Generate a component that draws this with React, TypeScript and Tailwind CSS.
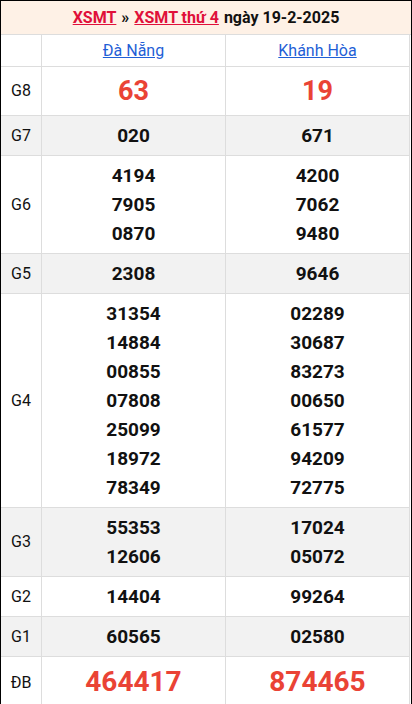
const rows: { label: string; a: string[]; b: string[]; kind?: 'big' | 'db'; grey?: boolean }[] = [
  { label: 'G8', a: ['63'], b: ['19'], kind: 'big' },
  { label: 'G7', a: ['020'], b: ['671'], grey: true },
  { label: 'G6', a: ['4194', '7905', '0870'], b: ['4200', '7062', '9480'] },
  { label: 'G5', a: ['2308'], b: ['9646'], grey: true },
  {
    label: 'G4',
    a: ['31354', '14884', '00855', '07808', '25099', '18972', '78349'],
    b: ['02289', '30687', '83273', '00650', '61577', '94209', '72775'],
  },
  { label: 'G3', a: ['55353', '12606'], b: ['17024', '05072'], grey: true },
  { label: 'G2', a: ['14404'], b: ['99264'] },
  { label: 'G1', a: ['60565'], b: ['02580'], grey: true },
  { label: 'ĐB', a: ['464417'], b: ['874465'], kind: 'db' },
]

function Nums({ list, kind }: { list: string[]; kind?: 'big' | 'db' }) {
  if (kind === 'big') {
    return <div className="h-[48px] flex items-center justify-center text-[27px] font-bold text-[#ea4335]">{list[0]}</div>
  }
  if (kind === 'db') {
    return <div className="h-[52px] flex items-center justify-center text-[28px] font-bold text-[#ea4335] pb-[2px]">{list[0]}</div>
  }
  return (
    <div className="flex flex-col items-center py-[5px]">
      {list.map((n, i) => (
        <div key={i} className="leading-[29px] text-[19px] font-bold text-[#111]">{n}</div>
      ))}
    </div>
  )
}

export default function App() {
  return (
    <div className="w-[412px] h-[704px] overflow-hidden bg-white border-l border-t border-r border-black font-['Roboto',sans-serif]">
      <div className="h-[34px] bg-[#fef1e6] border-b border-[#ddd] flex items-center justify-center text-[16px] font-bold text-[#111] pt-[1px]">
        <a className="text-[#e0103a] underline">XSMT</a>
        <span className="mx-[5px]">»</span>
        <a className="text-[#e0103a] underline">XSMT thứ 4</a>
        <span className="ml-[5px]">ngày 19-2-2025</span>
      </div>
      <div className="w-[409px]">
        <div className="flex border-b border-[#ddd] h-[32px]">
          <div className="w-[41px] border-r border-[#ddd]" />
          <div className="w-[184px] border-r border-[#ddd] flex items-center justify-center">
            <a className="text-[16px] text-[#1f5fd6] underline">Đà Nẵng</a>
          </div>
          <div className="w-[184px] border-r border-[#ddd] flex items-center justify-center">
            <a className="text-[16px] text-[#1f5fd6] underline">Khánh Hòa</a>
          </div>
        </div>
        {rows.map((r) => (
          <div key={r.label} className={`flex border-b border-[#ddd] ${r.grey ? 'bg-[#f2f2f2]' : 'bg-white'}`}>
            <div className="w-[41px] border-r border-[#ddd] flex items-center justify-center text-[16px] text-[#111]">{r.label}</div>
            <div className="w-[184px] border-r border-[#ddd]">
              <Nums list={r.a} kind={r.kind} />
            </div>
            <div className="w-[184px] border-r border-[#ddd]">
              <Nums list={r.b} kind={r.kind} />
            </div>
          </div>
        ))}
      </div>
    </div>
  )
}
